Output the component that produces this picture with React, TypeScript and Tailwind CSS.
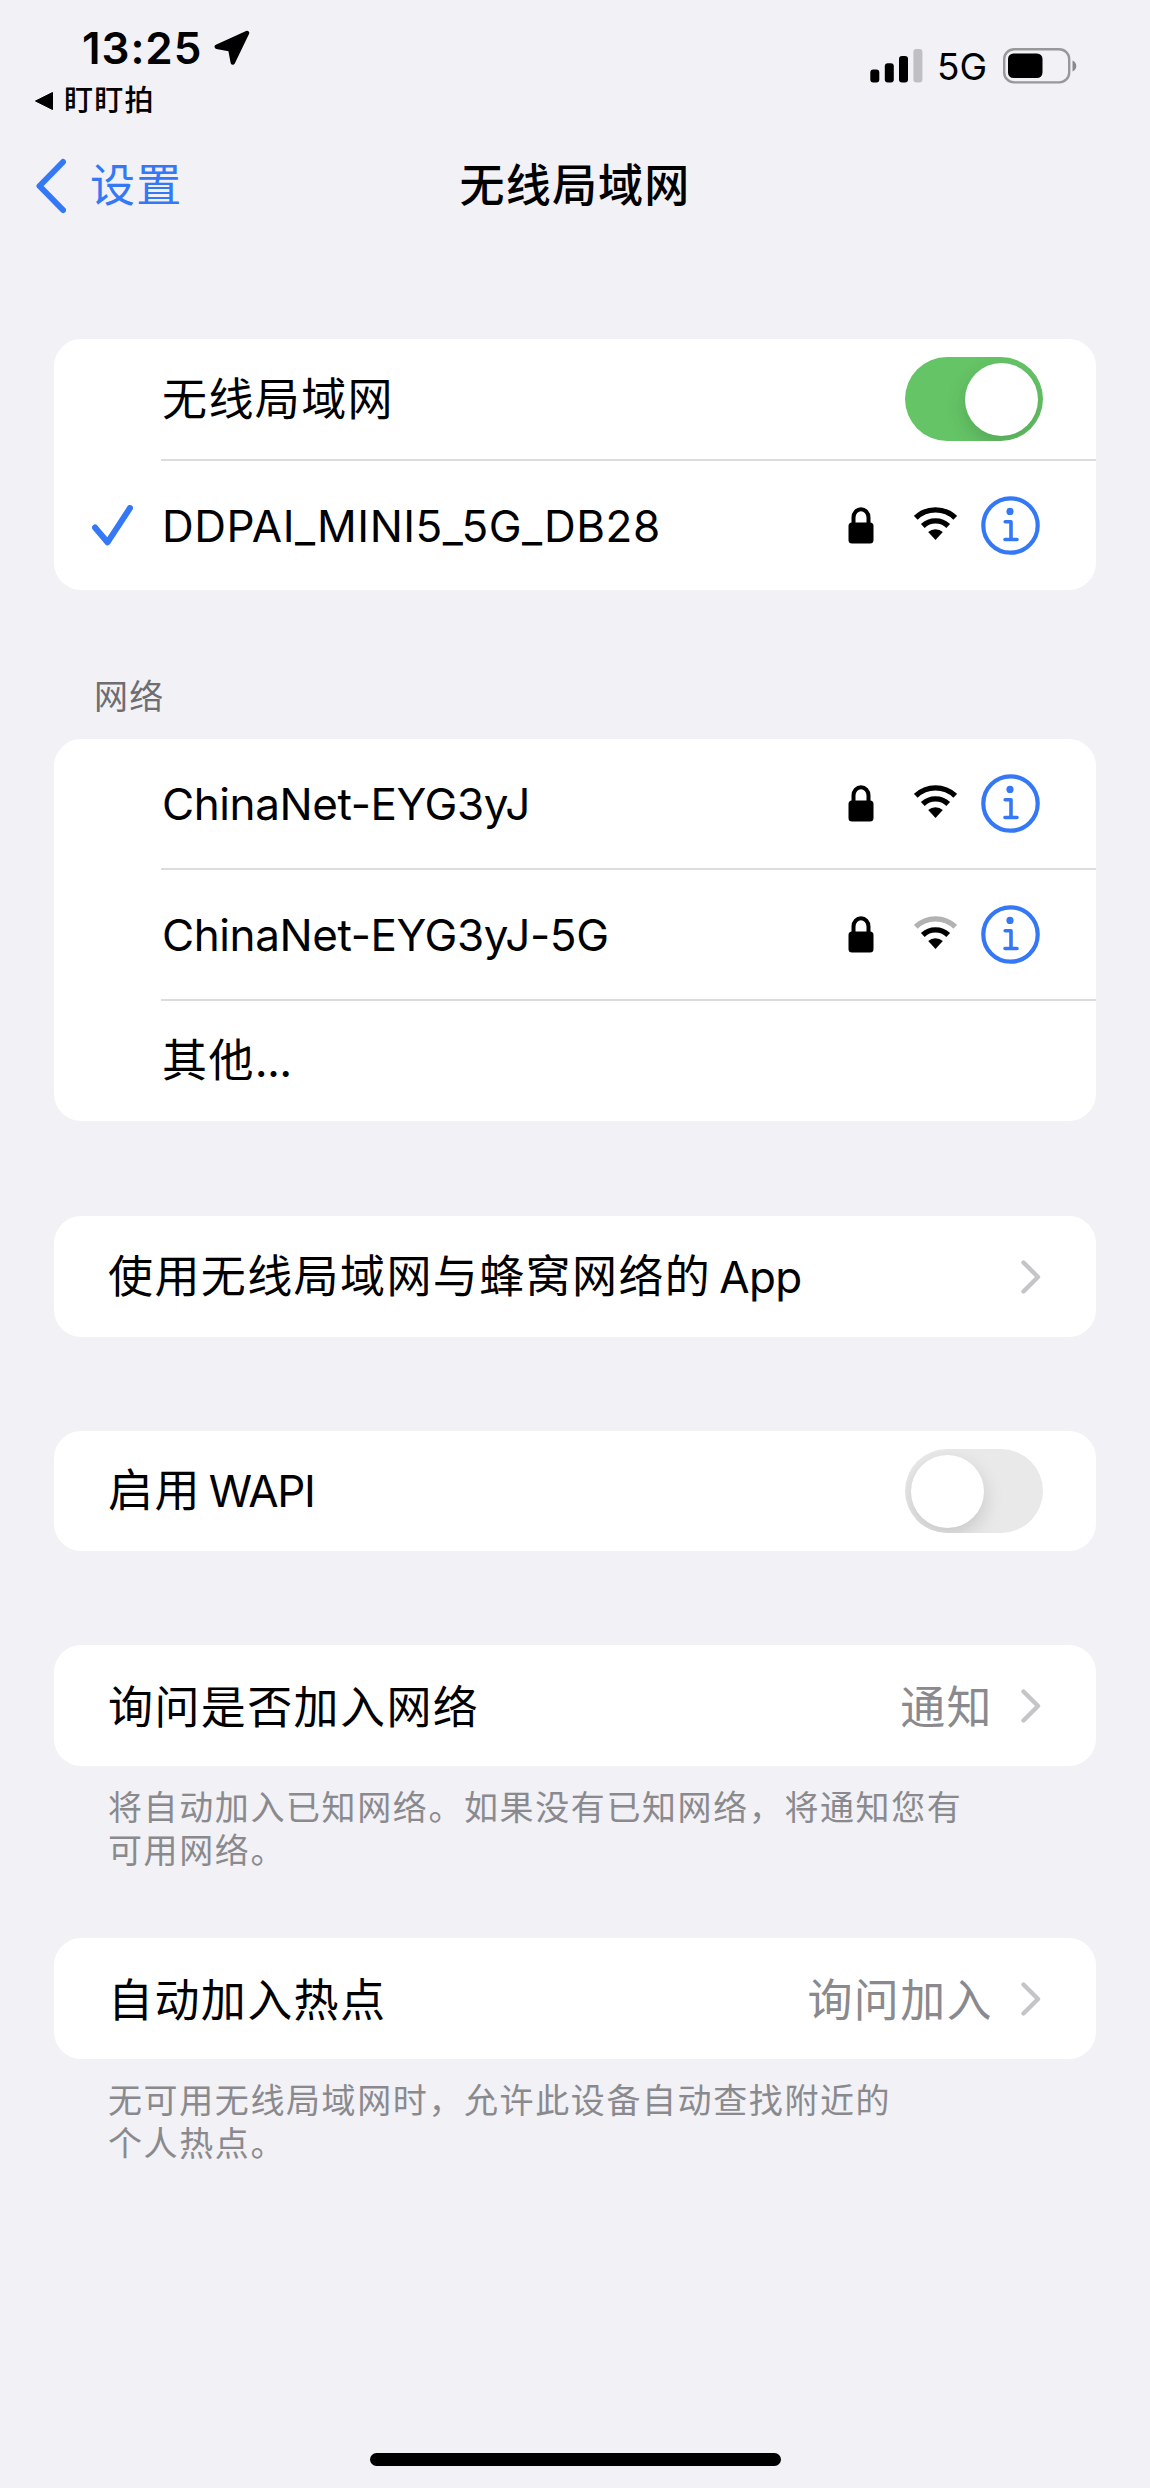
import { useState } from 'react';
import type { ReactNode } from 'react';

interface Network {
  name: string;
  strength: 2 | 3;
}

const networks: Network[] = [
  { name: 'ChinaNet-EYG3yJ', strength: 3 },
  { name: 'ChinaNet-EYG3yJ-5G', strength: 2 },
];

const LocationIcon = () => (
  <svg className="w-9 h-9" viewBox="0 0 36 36">
    <path
      d="M33 3 2.8 16.8 16.3 19.3 18.8 32.5Z"
      fill="black"
      stroke="black"
      strokeWidth="4.4"
      strokeLinejoin="round"
    />
  </svg>
);

const SignalIcon = () => (
  <svg className="w-[53px] h-[34px]" viewBox="0 0 53 34">
    <rect x="0.3" y="20.5" width="9" height="13" rx="3" />
    <rect x="14.8" y="14.3" width="9" height="19.2" rx="3" />
    <rect x="29" y="7" width="9" height="26.5" rx="3" />
    <rect x="43.4" y="0" width="9" height="33.5" rx="3" fill="#c0c0c4" />
  </svg>
);

const BatteryIcon = () => (
  <svg className="w-[75px] h-[36px]" viewBox="0 0 75 36">
    <rect
      x="1.2"
      y="1.2"
      width="65"
      height="33.2"
      rx="10"
      fill="none"
      stroke="#98989b"
      strokeWidth="2.4"
    />
    <rect x="5" y="5.5" width="34.5" height="24.5" rx="5.5" />
    <path d="M69.5 12.5c5 2 5 9 0 11Z" fill="#8a8a8d" />
  </svg>
);

const LockIcon = () => (
  <svg className="w-[26px] h-[37px]" viewBox="0 0 26 37">
    <path
      d="M5.5 17V10.5a7.5 8.3 0 0 1 15 0V17"
      fill="none"
      stroke="black"
      strokeWidth="4"
    />
    <rect x="0.5" y="15.5" width="25" height="21" rx="3.5" />
  </svg>
);

const WifiIcon = ({ strength }: { strength: 2 | 3 }) => (
  <svg className="block w-[43px] h-[33px]" viewBox="0 0 43 33" fill="none">
    <path
      d="M1.8 10.8a28.5 28.5 0 0 1 39.4 0"
      stroke={strength === 3 ? 'black' : '#b2b2b2'}
      strokeWidth="5.4"
    />
    <path d="M8.8 19a18.3 18.3 0 0 1 25.4 0" stroke="black" strokeWidth="5.4" />
    <path d="M21.5 33 14.2 25a10.8 10.8 0 0 1 14.6 0Z" fill="black" />
  </svg>
);

const InfoIcon = () => (
  <svg
    className="w-[59px] h-[59px]"
    viewBox="0 0 59 59"
    fill="none"
    stroke="#3478f6"
    strokeLinecap="round"
    strokeLinejoin="round"
  >
    <circle cx="29.5" cy="29.5" r="27.2" strokeWidth="4.2" />
    <circle cx="29" cy="15.4" r="3.6" fill="#3478f6" stroke="none" />
    <path d="M24.2 25.7H30V43M24 43.5H36" strokeWidth="3.6" />
  </svg>
);

const ChevronIcon = () => (
  <svg className="w-[20px] h-[34px]" viewBox="0 0 20 34">
    <path
      d="M2.5 2.5 17 17 2.5 31.5"
      fill="none"
      stroke="#c5c5c7"
      strokeWidth="4.4"
      strokeLinecap="round"
      strokeLinejoin="round"
    />
  </svg>
);

const Toggle = ({ initial = false }: { initial?: boolean }) => {
  const [isOn, setIsOn] = useState(initial);

  return (
    <button
      type="button"
      role="switch"
      aria-checked={isOn}
      onClick={() => setIsOn(!isOn)}
      className={`flex items-center w-[138px] h-[84px] rounded-full px-[5.5px] overflow-hidden cursor-pointer ${
        isOn ? 'justify-end bg-[#65c466]' : 'justify-start bg-[#e9e9ea]'
      }`}
    >
      <span className="block w-[73px] h-[73px] rounded-full bg-white shadow-[0_8px_20px_rgba(0,0,0,0.15)]" />
    </button>
  );
};

const Card = ({ children }: { children: ReactNode }) => (
  <div className="mx-[54px] rounded-[27px] bg-white overflow-hidden">
    {children}
  </div>
);

const NetworkRow = ({
  name,
  strength,
  connected = false,
}: Network & { connected?: boolean }) => (
  <div className="flex items-center h-[129px] pr-14">
    <div className="w-[108px] pl-[38px]">
      {connected && (
        <svg className="w-[41px] h-[41px]" viewBox="0 0 41 41">
          <path
            d="M3 22.5 15.5 37.3 38 3"
            fill="none"
            stroke="#3478f6"
            strokeWidth="6"
            strokeLinecap="round"
            strokeLinejoin="round"
          />
        </svg>
      )}
    </div>
    <span
      className={`grow ${connected ? 'tracking-[0.5px]' : 'tracking-[-0.4px]'}`}
    >
      {name}
    </span>
    <div className="flex items-center">
      <LockIcon />
      <span className="ml-10 mr-6 -mt-1">
        <WifiIcon strength={strength} />
      </span>
      <InfoIcon />
    </div>
  </div>
);

const Divider = () => <div className="h-[2px] ml-[107px] bg-[#dcdcde]" />;

interface LinkRowProps {
  label: ReactNode;
  value?: string;
}

const LinkRow = ({ label, value }: LinkRowProps) => (
  <div className="flex items-center h-[121px] pl-[54px] pr-[55px]">
    <div
      className={`flex grow justify-between text-[45px] tracking-[1.4px] ${value ? 'pt-1' : ''}`}
    >
      <span>{label}</span>
      {value && <span className="mr-7 text-[#8a8a8e]">{value}</span>}
    </div>
    <ChevronIcon />
  </div>
);

const App = () => {
  return (
    <div className="w-[1150px] h-[2488px] flex flex-col bg-[#f1f1f6] text-black text-[44px] leading-[60px] whitespace-nowrap font-['Inter','Noto_Sans_CJK_SC',sans-serif]">
      {/* STATUS BAR */}
      <div className="flex justify-between h-[130px] pr-[72px]">
        <div className="pl-[34px] pt-[18px]">
          <div className="flex items-center gap-3 pl-12">
            <span className="font-semibold tracking-[0.9px]">13:25</span>
            <LocationIcon />
          </div>
          <div className="flex items-center gap-[10px] h-[46px] text-[29px] tracking-[1.2px] font-medium">
            <svg className="w-5 h-5" viewBox="0 0 20 20">
              <path d="M1.5 10 18.5 1.5V18.5Z" stroke="black" strokeLinejoin="round" />
            </svg>
            盯盯拍
          </div>
        </div>
        <div className="flex items-center h-[131px]">
          <SignalIcon />
          <span className="ml-[14px] mr-4 pt-[2px] text-[37px]">5G</span>
          <BatteryIcon />
        </div>
      </div>

      {/* NAV BAR */}
      <div className="grid grid-cols-[1fr_auto_1fr] items-center h-[112px] px-9 text-[45px] tracking-[1.2px]">
        <button
          type="button"
          className="flex items-center gap-6 text-[#3478f6] cursor-pointer"
        >
          <svg className="w-[30px] h-[56px]" viewBox="0 0 30 56">
            <path
              d="M27 4 3.5 28 27 52"
              fill="none"
              stroke="#3478f6"
              strokeWidth="6"
              strokeLinecap="round"
              strokeLinejoin="round"
            />
          </svg>
          设置
        </button>
        <h1 className="font-medium">无线局域网</h1>
      </div>

      {/* CURRENT NETWORK */}
      <div className="mt-[97px]">
        <Card>
          <div className="flex items-center justify-between h-[120px] pl-[108px] pr-[53px]">
            <span className="pt-[2px] text-[45px] tracking-[1.4px]">
              无线局域网
            </span>
            <Toggle initial />
          </div>
          <Divider />
          <NetworkRow name="DDPAI_MINI5_5G_DB28" strength={3} connected />
        </Card>
      </div>

      {/* NETWORKS */}
      <h2 className="mt-[82px] mb-[18px] pl-[94px] text-[34px] leading-[49px] tracking-[1.2px] text-[#6d6d72]">
        网络
      </h2>
      <Card>
        {networks.map((network) => (
          <div key={network.name}>
            <NetworkRow {...network} />
            <Divider />
          </div>
        ))}
        <div className="flex items-center h-[120px] pl-[108px] text-[45px] tracking-[1.4px]">
          其他<span className="tracking-[-0.8px]">...</span>
        </div>
      </Card>

      {/* OPTIONS */}
      <div className="mt-[95px]">
        <Card>
          <LinkRow
            label={
              <>
                使用无线局域网与蜂窝网络的
                <span className="ml-2 text-[44px] tracking-[-0.6px]">App</span>
              </>
            }
          />
        </Card>
      </div>
      <div className="mt-[94px]">
        <Card>
          <div className="flex items-center justify-between h-[120px] pl-[54px] pr-[53px]">
            <span className="text-[45px] tracking-[1.4px]">
              启用
              <span className="ml-2 text-[44px] tracking-[-1.4px]">WAPI</span>
            </span>
            <Toggle />
          </div>
        </Card>
      </div>
      <div className="mt-[94px]">
        <Card>
          <LinkRow label="询问是否加入网络" value="通知" />
        </Card>
        <p className="mt-5 pl-[108px] text-[34px] leading-[43px] tracking-[1.6px] text-[#8a8a8e]">
          将自动加入已知网络。如果没有已知网络，将通知您有
          <br />
          可用网络。
        </p>
      </div>
      <div className="mt-[66px]">
        <Card>
          <LinkRow label="自动加入热点" value="询问加入" />
        </Card>
        <p className="mt-5 pl-[108px] text-[34px] leading-[43px] tracking-[1.6px] text-[#8a8a8e]">
          无可用无线局域网时，允许此设备自动查找附近的
          <br />
          个人热点。
        </p>
      </div>

      {/* HOME INDICATOR */}
      <div className="mt-auto mb-[22px] mx-auto w-[411px] h-[13px] rounded-full bg-black" />
    </div>
  );
};

export default App;
